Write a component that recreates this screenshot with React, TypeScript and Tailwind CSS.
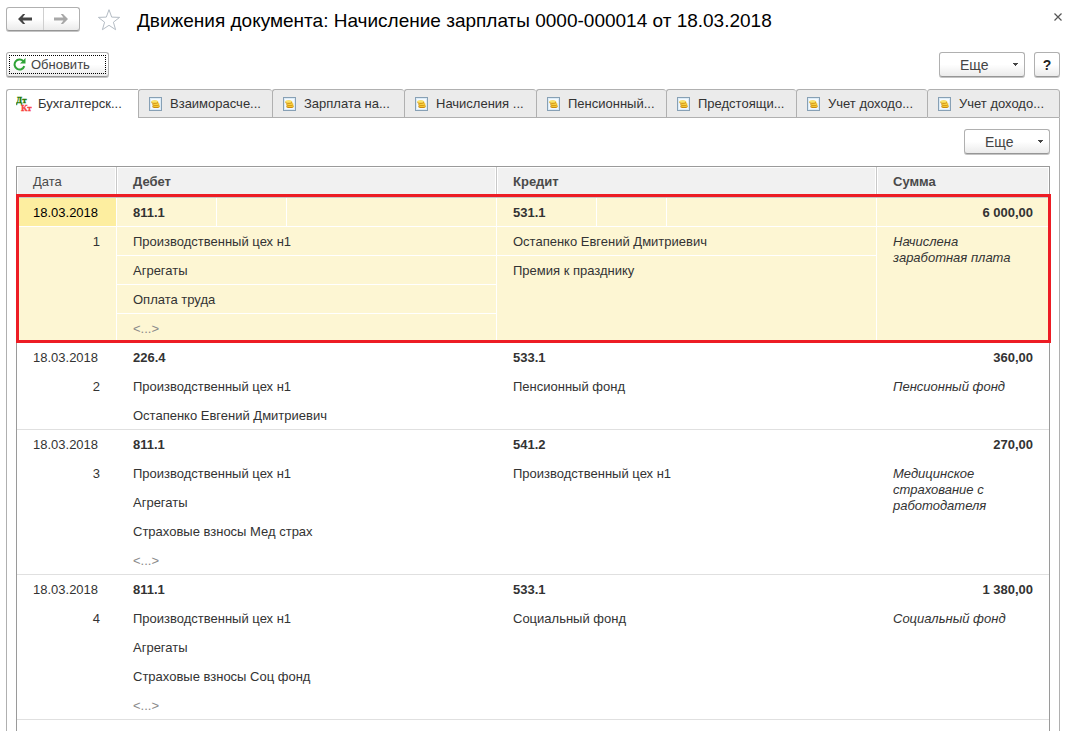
import { ReactNode } from "react";

type Entry = {
  date: string;
  no: number;
  debit: string;
  debitLines: string[];
  credit: string;
  creditLines: string[];
  sum: string;
  note: string;
  selected?: boolean;
};

const tabs = [
  "Бухгалтерск...",
  "Взаиморасче...",
  "Зарплата на...",
  "Начисления ...",
  "Пенсионный...",
  "Предстоящи...",
  "Учет доходо...",
  "Учет доходо...",
];

const entries: Entry[] = [
  {
    date: "18.03.2018",
    no: 1,
    debit: "811.1",
    debitLines: ["Производственный цех н1", "Агрегаты", "Оплата труда", "<...>"],
    credit: "531.1",
    creditLines: ["Остапенко Евгений Дмитриевич", "Премия к празднику"],
    sum: "6 000,00",
    note: "Начислена заработная плата",
    selected: true,
  },
  {
    date: "18.03.2018",
    no: 2,
    debit: "226.4",
    debitLines: ["Производственный цех н1", "Остапенко Евгений Дмитриевич"],
    credit: "533.1",
    creditLines: ["Пенсионный фонд"],
    sum: "360,00",
    note: "Пенсионный фонд",
  },
  {
    date: "18.03.2018",
    no: 3,
    debit: "811.1",
    debitLines: ["Производственный цех н1", "Агрегаты", "Страховые взносы Мед страх", "<...>"],
    credit: "541.2",
    creditLines: ["Производственный цех н1"],
    sum: "270,00",
    note: "Медицинское страхование с работодателя",
  },
  {
    date: "18.03.2018",
    no: 4,
    debit: "811.1",
    debitLines: ["Производственный цех н1", "Агрегаты", "Страховые взносы Соц фонд", "<...>"],
    credit: "533.1",
    creditLines: ["Социальный фонд"],
    sum: "1 380,00",
    note: "Социальный фонд",
  },
];

const buttonLook =
  "rounded-[3px] border border-[#b0b0b0] border-b-[#969696] bg-linear-to-b from-white from-50% to-[#ebebeb] shadow-[0_1px_0_#c4c4c4]";

function MoreButton() {
  return (
    <button type="button" className={`flex h-[25px] w-[86px] items-center pr-[6px] pl-5 text-sm text-[#444] ${buttonLook}`}>
      <span className="flex-1 text-left">Еще</span>
      <svg className="h-[3px] w-[5px]" viewBox="0 0 5 3" shapeRendering="crispEdges" aria-hidden="true">
        <path d="M0 0h5v1H4v1H3v1H2V2H1V1H0z" fill="#444" />
      </svg>
    </button>
  );
}

function LedgerIcon() {
  return (
    <svg className="size-4 shrink-0" viewBox="0 0 16 16" aria-hidden="true">
      <g fontFamily="Liberation Serif, serif" fontWeight="bold" fontSize="9" strokeWidth="0.300">
        <text x="0" y="7" fill="#1f7a00" stroke="#1f7a00">Дт</text>
        <text x="5" y="15" fill="#f8413d" stroke="#f8413d">Кт</text>
      </g>
    </svg>
  );
}

function CoinsIcon() {
  return (
    <svg className="h-[14px] w-[13px] shrink-0" viewBox="0 0 13 14" aria-hidden="true">
      <rect x="0.5" y="0.5" width="12" height="13" fill="#f4faff" stroke="#87a0b5" />
      <rect x="1.5" y="1.5" width="10" height="11" fill="none" stroke="#dcebf6" />
      <ellipse cx="7" cy="9.400" rx="3.700" ry="1.700" fill="#c98a10" />
      <ellipse cx="7.200" cy="8.800" rx="3.500" ry="1.300" fill="#f5c832" />
      <ellipse cx="6.800" cy="7.300" rx="3.500" ry="1.500" fill="#d08f12" />
      <ellipse cx="7" cy="6.800" rx="3.300" ry="1.200" fill="#f7d244" />
      <ellipse cx="5.800" cy="5.200" rx="3.500" ry="1.700" fill="#d69a18" />
      <ellipse cx="5.600" cy="4.500" rx="3.200" ry="1.300" fill="#fbe468" />
    </svg>
  );
}

function Cell({
  children,
  className = "",
  colSpan,
  rowSpan,
}: {
  children?: ReactNode;
  className?: string;
  colSpan?: number;
  rowSpan?: number;
}) {
  return (
    <td colSpan={colSpan} rowSpan={rowSpan} className={`h-[29px] border-b pt-[7px] align-top leading-4 ${className}`}>
      {children}
    </td>
  );
}

function EntryRows({ entry }: { entry: Entry }) {
  const count = entry.debitLines.length;
  const on = entry.selected;
  const inner = on ? "border-r border-white bg-[#fdf6d3]" : "border-transparent";
  const last = on ? "border-r border-white bg-[#fdf6d3]" : "border-[#e0e0e0]";

  return (
    <tbody
      className={
        on
          ? "relative after:pointer-events-none after:absolute after:-top-1 after:-right-0.5 after:bottom-0 after:-left-px after:border-[3px] after:border-[#ed1c24]"
          : ""
      }
    >
      <tr>
        <Cell className={on ? "border-r border-white bg-[#fdeea0] pl-4 text-black" : "border-transparent pl-4"}>{entry.date}</Cell>
        <Cell className={`pl-4 font-bold ${inner}`}>{entry.debit}</Cell>
        <Cell className={inner} />
        <Cell className={inner} />
        <Cell className={`pl-4 font-bold ${inner}`}>{entry.credit}</Cell>
        <Cell className={inner} />
        <Cell className={inner} />
        <Cell className={`text-right font-bold ${on ? "pr-[15px]" : "pr-4"} ${inner}`}>{entry.sum}</Cell>
      </tr>
      {entry.debitLines.map((line, i) => {
        const isLast = i === count - 1;
        const creditLast = i === entry.creditLines.length - 1;
        return (
          <tr key={i}>
            {i === 0 && (
              <Cell rowSpan={count} className={`text-right ${on ? "pr-4" : "pr-[17px]"} ${last}`}>
                {entry.no}
              </Cell>
            )}
            <Cell colSpan={3} className={`pl-4 ${isLast ? last : inner} ${line === "<...>" ? "text-[#8a8a8a]" : ""}`}>
              {line}
            </Cell>
            {i < entry.creditLines.length && (
              <Cell colSpan={3} rowSpan={creditLast ? count - i : 1} className={`pl-4 ${creditLast ? last : inner}`}>
                {entry.creditLines[i]}
              </Cell>
            )}
            {i === 0 && (
              <Cell rowSpan={count} className={`pr-4 pl-4 italic ${last}`}>
                {entry.note}
              </Cell>
            )}
          </tr>
        );
      })}
    </tbody>
  );
}

const headCell =
  "h-[31px] border-r border-b border-[#c8c8c8] bg-[#f1f1f1] pl-4 text-left shadow-[inset_1px_1px_0_#fff,inset_-1px_0_0_#fff]";

export default function App() {
  return (
    <div className="flex min-h-screen flex-col bg-white pr-[13px] pl-[6px] font-['Liberation_Sans',Arial,sans-serif] text-[13px] text-[#333]">
      <header className="flex h-[52px] items-start pt-[7px]">
        <div className={`flex h-6 w-[74px] shrink-0 ${buttonLook}`}>
          <button type="button" aria-label="Назад" className="flex flex-1 items-center justify-center border-r border-[#cfcfcf]">
            <svg width="14" height="10" viewBox="0 0 14 10" aria-hidden="true">
              <path d="M0 5 5 0h2.200L4.600 3.600H14v2.800H4.600L7.200 10H5z" fill="#444" />
            </svg>
          </button>
          <button type="button" aria-label="Вперед" className="flex flex-1 items-center justify-center">
            <svg width="14" height="10" viewBox="0 0 14 10" aria-hidden="true">
              <path d="M14 5 9 0H6.800l2.600 3.600H0v2.800h9.400L6.800 10H9z" fill="#a8a8a8" />
            </svg>
          </button>
        </div>
        <button type="button" aria-label="Добавить в избранное" className="mt-px ml-[17px] shrink-0">
          <svg width="24" height="24" viewBox="0 0 24 24" aria-hidden="true">
            <path
              d="M12 1.700 14.700 9.100 22.600 9.400 16.400 14.200 18.600 21.700 12 17.300 5.400 21.700 7.600 14.200 1.400 9.400 9.300 9.100z"
              fill="#fff"
              stroke="#b4bcc4"
            />
          </svg>
        </button>
        <h1 className="ml-4 flex-1 text-[19px] leading-7 whitespace-nowrap text-black">
          Движения документа: Начисление зарплаты 0000-000014 от 18.03.2018
        </h1>
        <button type="button" aria-label="Закрыть" className="-mr-2 flex size-5 items-center justify-center">
          <svg width="8" height="8" viewBox="0 0 8 8" aria-hidden="true">
            <path d="M.5.5l7 7M7.500.5l-7 7" stroke="#555" strokeWidth="1.200" />
          </svg>
        </button>
      </header>

      <div className="flex h-[37px] items-start">
        <button type="button" className={`h-[25px] w-[103px] p-[2px] ${buttonLook}`}>
          <span className="flex h-full items-center gap-[5px] border border-dotted border-black pl-[3px] text-[#444]">
            <svg width="13" height="13" viewBox="0 0 13 13" aria-hidden="true">
              <path d="M10.300 3.200A5 5 0 1 0 11.300 8.200" fill="none" stroke="#2fa336" strokeWidth="2" />
              <path d="M12.500 0v5.500H7z" fill="#2fa336" />
            </svg>
            Обновить
          </span>
        </button>
        <div className="ml-auto flex gap-[9px]">
          <MoreButton />
          <button type="button" className={`h-[25px] w-[26px] text-sm font-bold text-[#222] ${buttonLook}`}>
            ?
          </button>
        </div>
      </div>

      <div role="tablist" className="grid grid-cols-[132fr_134fr_132fr_132fr_130fr_130fr_131fr_133fr]">
        {tabs.map((label, i) => (
          <button
            key={i}
            type="button"
            role="tab"
            aria-selected={i === 0}
            className={
              i === 0
                ? "flex h-[29px] items-center gap-[6px] rounded-tl-[3px] border-t border-l border-[#b0b0b0] bg-white pl-[9px] whitespace-nowrap"
                : "flex h-[29px] items-center gap-2 rounded-t-[3px] border-t border-b border-l border-[#b0b0b0] bg-[#ebebeb] pl-[10px] whitespace-nowrap last:border-r"
            }
          >
            {i === 0 ? <LedgerIcon /> : <CoinsIcon />}
            {label}
          </button>
        ))}
      </div>

      <main className="flex flex-1 flex-col border-x border-[#b0b0b0] px-[9px] pt-[11px]">
        <div className="flex h-[37px] items-start justify-end">
          <MoreButton />
        </div>
        <div className="flex-1 border border-b-0 border-[#9a9a9a]">
          <table className="w-full table-fixed border-separate border-spacing-0">
            <colgroup>
              <col className="w-[100px]" />
              <col className="w-[100px]" />
              <col className="w-[70px]" />
              <col />
              <col className="w-[100px]" />
              <col className="w-[70px]" />
              <col />
              <col className="w-[172px]" />
            </colgroup>
            <thead className="text-[#4a4a4a]">
              <tr>
                <th className={`${headCell} font-normal`}>Дата</th>
                <th colSpan={3} className={headCell}>Дебет</th>
                <th colSpan={3} className={headCell}>Кредит</th>
                <th className={`${headCell} border-r-0`}>Сумма</th>
              </tr>
            </thead>
            {entries.map((entry) => (
              <EntryRows key={entry.no} entry={entry} />
            ))}
          </table>
        </div>
      </main>
    </div>
  );
}
